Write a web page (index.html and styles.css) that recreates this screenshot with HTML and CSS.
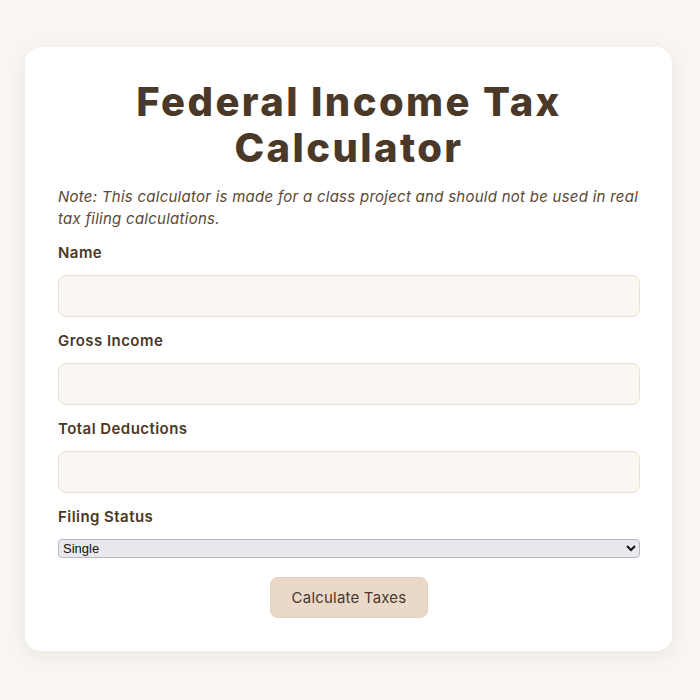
FILE: index.html
```html
<!DOCTYPE html>
<html lang="en">
<head>
<meta charset="utf-8">
<title>Federal Income Tax Calculator</title>
<link rel="stylesheet" href="styles.css">
</head>
<body>
<main class="card">
  <h1 class="title">Federal Income Tax Calculator</h1>
  <p class="note">Note: This calculator is made for a class project and should not be used in real tax filing calculations.</p>
  <form class="form">
    <label class="label" for="name">Name</label>
    <input class="field" id="name" type="text">
    <label class="label" for="gross">Gross Income</label>
    <input class="field" id="gross" type="text">
    <label class="label" for="ded">Total Deductions</label>
    <input class="field" id="ded" type="text">
    <label class="label" for="status">Filing Status</label>
    <select class="select" id="status">
      <option>Single</option>
      <option>Married Filing Jointly</option>
      <option>Married Filing Separately</option>
      <option>Head of Household</option>
    </select>
    <div class="actions">
      <button class="btn" type="button">Calculate Taxes</button>
    </div>
  </form>
</main>
</body>
</html>
```

FILE: styles.css
```css
html, body {
  margin: 0;
  padding: 0;
  background: #f8f5f2;
}
body {
  padding: 47px 28px 50px 25px;
  font-family: "Inter", "Open Sans", sans-serif;
  color: #4a3828;
}
.card {
  background: #ffffff;
  border-radius: 16px;
  box-shadow: 0 4px 18px rgba(90, 60, 30, 0.08);
  padding: 32px 32px 33px 33px;
  box-sizing: border-box;
  width: 647px;
}
.title {
  margin: 0;
  text-align: center;
  font-size: 40px;
  line-height: 46px;
  font-weight: 800;
  color: #4a3828;
  letter-spacing: 2.4px;
}
.note {
  margin: 15px 0 0;
  font-style: italic;
  font-size: 15px;
  line-height: 22px;
  color: #5a4838;
  letter-spacing: 0.26px;
}
.form {
  display: flex;
  flex-direction: column;
  margin-top: 12px;
}
.label {
  font-size: 15px;
  font-weight: 600;
  line-height: 22px;
  margin-bottom: 11px;
  letter-spacing: 0.45px;
}
.field {
  height: 42px;
  box-sizing: border-box;
  border: 1px solid #ebdfd3;
  border-radius: 8px;
  background: #faf6f1;
  margin: 0 0 13px;
  padding: 0 12px;
  font: inherit;
}
.select {
  width: 100%;
  height: 19px;
  margin: 0;
  background-color: #e9e8ee;
  border: 1px solid #b9b8c0;
  border-radius: 4px;
  color: #111;
  font-family: "Liberation Sans", Arial, sans-serif;
  font-size: 13px;
}
.actions {
  display: flex;
  justify-content: center;
  margin-top: 19px;
}
.btn {
  width: 158px;
  height: 41px;
  background: #ead9c8;
  border: 1px solid #e2cfbc;
  border-radius: 8px;
  font-family: inherit;
  font-size: 15px;
  letter-spacing: 0.2px;
  color: #4a3828;
}
```
